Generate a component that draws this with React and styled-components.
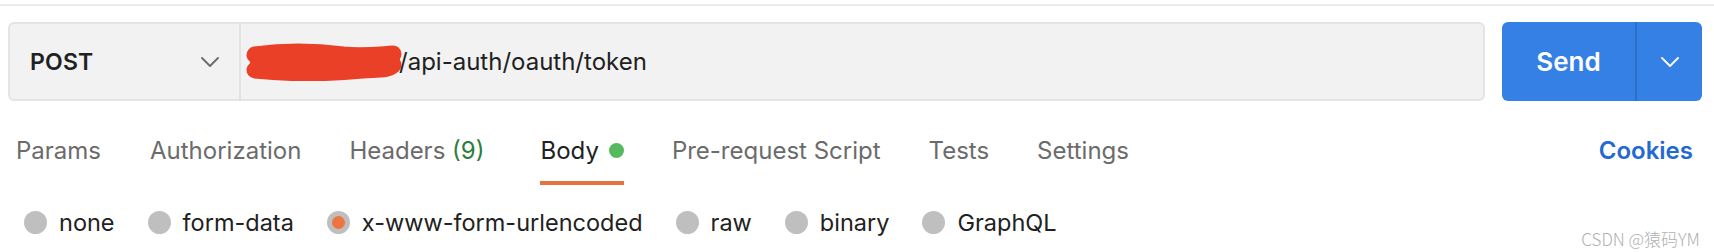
import React from "react";
import styled, { createGlobalStyle } from "styled-components";

const Global = createGlobalStyle`
  html, body { margin: 0; padding: 0; background: #ffffff; }
  body { font-family: Inter, "Noto Sans", sans-serif; color: #212121; }
  * { box-sizing: border-box; }
`;

const Page = styled.div`
  position: relative;
  width: 1714px;
  height: 252px;
  overflow: hidden;
  background: #fff;
`;

const TopRule = styled.div`
  margin-top: 4px;
  height: 2px;
  background: #ececec;
`;

const RequestBar = styled.div`
  display: flex;
  gap: 17px;
  margin-top: 16px;
  padding: 0 12px 0 8px;
  height: 79px;
`;

const UrlGroup = styled.div`
  flex: 1;
  display: flex;
  background: #f2f2f2;
  border: 2px solid #e4e4e4;
  border-radius: 6px;
  overflow: hidden;
`;

const MethodSelect = styled.div`
  width: 231px;
  flex: none;
  display: flex;
  align-items: center;
  justify-content: space-between;
  padding: 0 20px 0 20px;
  border-right: 2px solid #e2e2e2;
`;

const MethodLabel = styled.span`
  font-size: 23px;
  font-weight: 600;
  letter-spacing: 0.2px;
  color: #212121;
`;

const UrlField = styled.div`
  flex: 1;
  display: flex;
  align-items: center;
  padding-left: 2px;
`;

const UrlText = styled.span`
  font-size: 24px;
  color: #212121;
  margin-left: -4px;
`;

const SendGroup = styled.div`
  width: 200px;
  flex: none;
  display: flex;
  background: #3580e4;
  border-radius: 6px;
  overflow: hidden;
`;

const SendButton = styled.div`
  width: 135px;
  display: flex;
  align-items: center;
  justify-content: center;
  color: #fff;
  font-size: 26px;
  font-weight: 600;
  border-right: 2px solid #2b6fcc;
`;

const SendMenu = styled.div`
  flex: 1;
  display: flex;
  align-items: center;
  justify-content: center;
`;

const TabsRow = styled.div`
  display: flex;
  align-items: flex-end;
  padding: 0 21px 0 16px;
  margin-top: 28px;
  height: 56px;
`;

const Tab = styled.div`
  display: flex;
  align-items: center;
  gap: 10px;
  height: 56px;
  padding-bottom: 10px;
  margin-right: ${(p) => p.$gap ?? 48}px;
  font-size: 24px;
  color: ${(p) => (p.$active ? "#212121" : "#6b6b6b")};
  border-bottom: 4px solid ${(p) => (p.$active ? "#e9703f" : "transparent")};
`;

const Count = styled.span`
  color: #2e7d3b;
`;

const Dot = styled.span`
  width: 15px;
  height: 15px;
  border-radius: 50%;
  background: #56b95d;
`;

const Cookies = styled.div`
  margin-left: auto;
  height: 56px;
  padding-bottom: 13px;
  display: flex;
  align-items: center;
  font-size: 24px;
  font-weight: 600;
  color: #2468d2;
`;

const RadioRow = styled.div`
  display: flex;
  align-items: center;
  padding-left: 24px;
  margin-top: 23px;
`;

const RadioOption = styled.label`
  display: flex;
  align-items: center;
  gap: 12px;
  margin-right: 33px;
  font-size: 23.5px;
  color: #212121;
`;

const RadioCircle = styled.span`
  width: 23px;
  height: 23px;
  border-radius: 50%;
  background: #bfbfbf;
  display: flex;
  align-items: center;
  justify-content: center;
  &::after {
    content: "";
    width: 13px;
    height: 13px;
    border-radius: 50%;
    background: ${(p) => (p.$checked ? "#ee7442" : "transparent")};
  }
`;

const Watermark = styled.div`
  position: absolute;
  right: 14px;
  bottom: 1px;
  font-family: "Noto Sans CJK SC", "Noto Sans", sans-serif;
  font-weight: 300;
  font-size: 17px;
  color: #b0b0b0;
`;

const Chevron = ({ color }) => (
  <svg width="18" height="10" viewBox="0 0 18 10" fill="none">
    <path d="M1 1l8 8 8-8" stroke={color} strokeWidth="1.8" strokeLinecap="round" strokeLinejoin="round" />
  </svg>
);

const Redaction = () => (
  <svg width="160" height="38" viewBox="0 0 160 38">
    <path
      d="M12 12 C40 8 70 8 100 12 C120 14 135 12 150 11 M12 27 C50 31 90 30 120 27 C135 26 145 27 150 22"
      stroke="#ea4027"
      strokeWidth="17"
      strokeLinecap="round"
      fill="none"
    />
    <path d="M14 19 L150 17" stroke="#ea4027" strokeWidth="14" strokeLinecap="round" />
  </svg>
);

const tabs = [
  { label: "Params", gap: 49 },
  { label: "Authorization", gap: 48 },
  { label: "Headers", count: "(9)", gap: 56 },
  { label: "Body", active: true, dot: true },
  { label: "Pre-request Script" },
  { label: "Tests" },
  { label: "Settings" },
];

const bodyTypes = [
  { label: "none" },
  { label: "form-data" },
  { label: "x-www-form-urlencoded", checked: true },
  { label: "raw" },
  { label: "binary" },
  { label: "GraphQL" },
];

export default function App() {
  return (
    <Page>
      <Global />
      <TopRule />
      <RequestBar>
        <UrlGroup>
          <MethodSelect>
            <MethodLabel>POST</MethodLabel>
            <Chevron color="#6b6b6b" />
          </MethodSelect>
          <UrlField>
            <Redaction />
            <UrlText>/api-auth/oauth/token</UrlText>
          </UrlField>
        </UrlGroup>
        <SendGroup>
          <SendButton>Send</SendButton>
          <SendMenu>
            <Chevron color="#ffffff" />
          </SendMenu>
        </SendGroup>
      </RequestBar>
      <TabsRow>
        {tabs.map((t) => (
          <Tab key={t.label} $active={t.active} $gap={t.gap}>
            <span>
              {t.label}
              {t.count && <Count> {t.count}</Count>}
            </span>
            {t.dot && <Dot />}
          </Tab>
        ))}
        <Cookies>Cookies</Cookies>
      </TabsRow>
      <RadioRow>
        {bodyTypes.map((b) => (
          <RadioOption key={b.label}>
            <RadioCircle $checked={b.checked} />
            {b.label}
          </RadioOption>
        ))}
      </RadioRow>
      <Watermark>CSDN @猿码YM</Watermark>
    </Page>
  );
}
